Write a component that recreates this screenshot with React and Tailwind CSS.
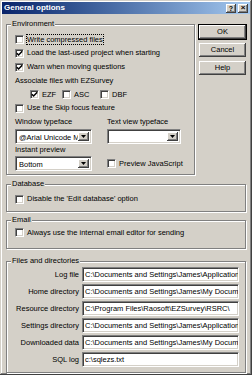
import React from "react";

const SUNKEN =
  "bg-white border border-t-[#808080] border-l-[#808080] border-b-white border-r-white shadow-[inset_1px_1px_0_#404040,inset_-1px_-1px_0_#d4d0c8]";
const RAISED =
  "bg-[#d4d0c8] shadow-[inset_-1px_-1px_0_#404040,inset_1px_1px_0_#fff,inset_-2px_-2px_0_#808080]";

function Check({ checked }) {
  return (
    <span className={`w-[9px] h-[9px] shrink-0 flex items-center justify-center ${SUNKEN}`}>
      {checked && (
        <svg width="7" height="7" viewBox="0 0 7 7">
          <path d="M0.8 3.2 L2.6 5 L6.2 1.2" stroke="#000" strokeWidth="1.5" fill="none" />
        </svg>
      )}
    </span>
  );
}

function CheckRow({ checked, label, focus, className = "" }) {
  return (
    <div className={`flex items-center whitespace-nowrap ${className}`}>
      <Check checked={checked} />
      {focus ? (
        <span className="ml-[2px] border border-dotted border-black leading-[9px]">{label}</span>
      ) : (
        <span className="ml-[3px]">{label}</span>
      )}
    </div>
  );
}

function Group({ title, className = "", children }) {
  return (
    <fieldset className={`border border-[#808080] shadow-[1px_1px_0_#fff,inset_1px_1px_0_#fff] ${className}`}>
      <legend className="ml-[4px] px-[1px] bg-[#d4d0c8] leading-[10px]">{title}</legend>
      {children}
    </fieldset>
  );
}

function Combo({ value }) {
  return (
    <div className={`h-[15px] flex items-stretch p-[2px] ${SUNKEN}`}>
      <span className="flex-1 overflow-hidden whitespace-nowrap pl-[1px] leading-[11px]">{value}</span>
      <span className={`w-[11px] flex items-center justify-center ${RAISED}`}>
        <svg width="5" height="3" viewBox="0 0 5 3">
          <path d="M0 0h5L2.5 3z" fill="#000" />
        </svg>
      </span>
    </div>
  );
}

function Btn({ label, def }) {
  return (
    <div
      className={`h-[14px] flex items-center justify-center ${RAISED} ${def ? "outline outline-1 outline-black" : ""}`}
    >
      {label}
    </div>
  );
}

const FILES = [
  ["Log file", "C:\\Documents and Settings\\James\\Application"],
  ["Home directory", "C:\\Documents and Settings\\James\\My Docum"],
  ["Resource directory", "C:\\Program Files\\Raosoft\\EZSurvey\\RSRC\\"],
  ["Settings directory", "C:\\Documents and Settings\\James\\Application"],
  ["Downloaded data", "C:\\Documents and Settings\\James\\My Docum"],
  ["SQL log", "c:\\sqlezs.txt"],
];

export default function App() {
  return (
    <div className="w-[252px] h-[375px] bg-[#d4d0c8] p-[2px] flex flex-col font-['Liberation_Sans',Arial,sans-serif] text-[7.5px] text-black shadow-[inset_-1px_-1px_0_#404040,inset_1px_1px_0_#d4d0c8,inset_-2px_-2px_0_#808080,inset_2px_2px_0_#fff] overflow-hidden">
      {/* Title bar */}
      <div className="h-[13px] flex items-center bg-gradient-to-r from-[#0a246a] to-[#a6caf0] pl-[2px] pr-[2px]">
        <span className="text-white font-bold text-[8px] flex-1">General options</span>
        <span className={`w-[10px] h-[9px] flex items-center justify-center font-bold text-[7px] leading-none ${RAISED}`}>?</span>
        <span className={`ml-[2px] w-[10px] h-[9px] flex items-center justify-center font-bold text-[8px] leading-none ${RAISED}`}>×</span>
      </div>

      <div className="flex mt-[5px] pl-[4px]">
        <Group title="Environment" className="w-[189px]">
          <div className="pt-[3px] pl-[8px] pb-[3px] flex flex-col">
            <CheckRow className="h-[14px]" label="Write compressed files" focus />
            <CheckRow className="h-[14px]" checked label="Load the last-used project when starting" />
            <CheckRow className="h-[14px]" checked label="Warn when moving questions" />
            <div className="h-[14px] flex items-center">Associate files with EZSurvey</div>
            <div className="h-[13px] flex items-center pl-[15px]">
              <CheckRow className="w-[32px]" checked label="EZF" />
              <CheckRow className="w-[38px]" label="ASC" />
              <CheckRow label="DBF" />
            </div>
            <CheckRow className="h-[14px]" label="Use the Skip focus feature" />
            <div className="grid grid-cols-[77px_74px] gap-x-[15px]">
              <div className="h-[14px] flex items-center">Window typeface</div>
              <div className="h-[14px] flex items-center">Text view typeface</div>
              <Combo value="@Arial Unicode MS" />
              <Combo value="" />
              <div className="h-[12px] flex items-center">Instant preview</div>
              <div />
              <Combo value="Bottom" />
              <CheckRow className="h-[15px]" label="Preview JavaScript" />
            </div>
          </div>
        </Group>
        <div className="ml-[4px] w-[47px] mt-[6px] flex flex-col gap-[4px]">
          <Btn label="OK" def />
          <Btn label="Cancel" />
          <Btn label="Help" />
        </div>
      </div>

      <Group title="Database" className="mt-[4px] ml-[4px] w-[240px]">
        <div className="pt-[3px] pl-[8px] pb-[5px]">
          <CheckRow className="h-[14px]" label="Disable the 'Edit database' option" />
        </div>
      </Group>

      <Group title="Email" className="mt-[3px] ml-[4px] w-[240px]">
        <div className="pt-[1px] pl-[8px] pb-[9px]">
          <CheckRow className="h-[13px]" label="Always use the internal email editor for sending" />
        </div>
      </Group>

      <Group title="Files and directories" className="mt-[7px] ml-[4px] w-[240px]">
        <div className="pt-[1px] pb-[5px] flex flex-col gap-[2px]">
          {FILES.map(([label, value]) => (
            <div key={label} className="flex items-center">
              <span className="w-[72px] text-right whitespace-nowrap">{label}</span>
              <div className={`ml-[3px] w-[157px] h-[15px] flex items-center pl-[2px] overflow-hidden whitespace-nowrap ${SUNKEN}`}>
                {value}
              </div>
            </div>
          ))}
        </div>
      </Group>
    </div>
  );
}
